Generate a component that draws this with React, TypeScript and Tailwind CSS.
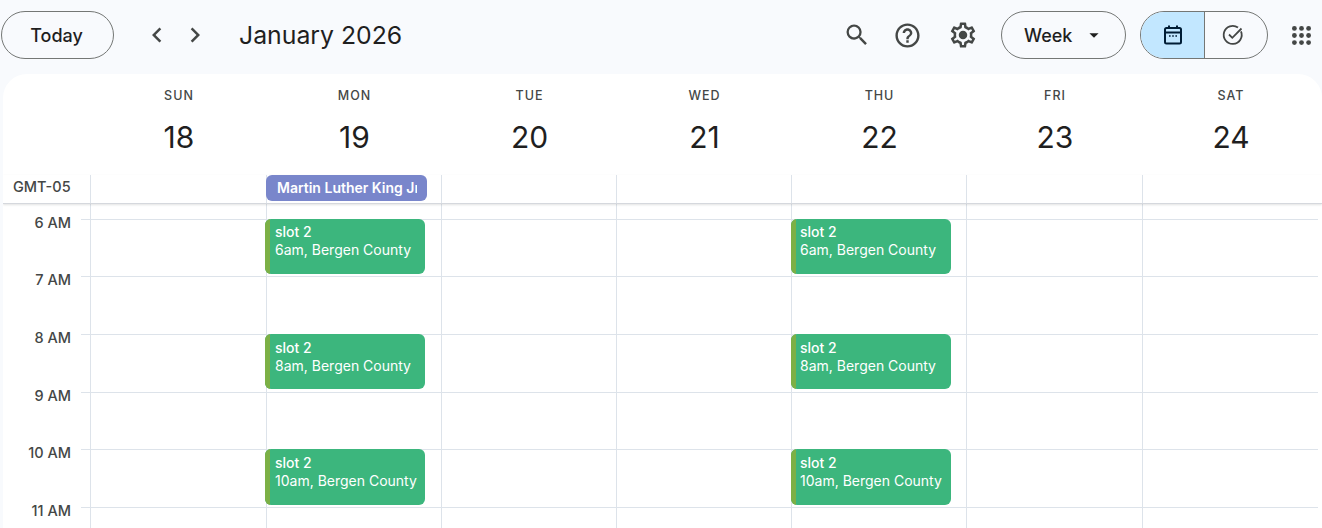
import React from "react";
import { MdOutlineHelpOutline, MdSearch, MdChevronLeft, MdChevronRight, MdArrowDropDown } from "react-icons/md";

const days = [
  ["SUN", "18"], ["MON", "19"], ["TUE", "20"], ["WED", "21"], ["THU", "22"], ["FRI", "23"], ["SAT", "24"],
];
const hours = [
  { h: "6 AM", rowCls: "h-[57px]", ev: "6am", evCls: "h-[55px] pt-[4px]" },
  { h: "7 AM", rowCls: "h-[58px]", ev: "", evCls: "" },
  { h: "8 AM", rowCls: "h-[58px]", ev: "8am", evCls: "h-[55px] pt-[5px]" },
  { h: "9 AM", rowCls: "h-[57px]", ev: "", evCls: "" },
  { h: "10 AM", rowCls: "h-[58px]", ev: "10am", evCls: "h-[56px] pt-[5px]" },
  { h: "11 AM", rowCls: "h-[58px]", ev: "", evCls: "" },
];

function Event({ label, cls, thu }: { label: string; cls: string; thu: boolean }) {
  return (
    <div className={`relative z-10 mt-[-1px] w-[160px] overflow-hidden rounded-[6px] bg-[#3cb67d] text-[14px] leading-[18px] text-white ${thu ? "ml-[-1px] pl-[9px]" : "ml-[-2px] pl-[10px]"} ${cls}`}>
      <div className="absolute bottom-0 left-0 top-0 w-[5px] bg-[#7cb046]" />
      <div className="font-medium">slot 2</div>
      <div className="whitespace-nowrap">{label}, Bergen County</div>
    </div>
  );
}

export default function App() {
  return (
    <div className="h-[528px] w-[1322px] overflow-hidden bg-[#f8fafd] font-['Inter','Roboto',sans-serif] text-[#1f1f1f]">
      <header className="flex h-[74px] items-center pb-[4px]">
        <button className="ml-[1px] flex h-[48px] w-[113px] items-center justify-center rounded-full border border-[#747775] pr-[2px] text-[18px] font-medium">Today</button>
        <div className="ml-[28px] flex items-center gap-[8px] text-[#444746]">
          <MdChevronLeft size={30} />
          <MdChevronRight size={30} />
        </div>
        <h1 className="ml-[29px] pt-[2px] text-[24.8px] font-normal">January 2026</h1>
        <div className="ml-auto flex items-center text-[#444746]">
          <MdSearch size={28} />
          <MdOutlineHelpOutline size={29} className="ml-[22px]" />
          <svg className="ml-[26px]" width="30" height="30" viewBox="0 0 24 24" fill="currentColor">
            <path d="M19.43 12.98c.04-.32.07-.64.07-.98 0-.34-.03-.66-.07-.98l2.11-1.65c.19-.15.24-.42.12-.64l-2-3.46c-.09-.16-.26-.25-.44-.25-.06 0-.12.01-.17.03l-2.49 1c-.52-.4-1.08-.73-1.69-.98l-.38-2.65C14.46 2.18 14.25 2 14 2h-4c-.25 0-.46.18-.49.42l-.38 2.65c-.61.25-1.17.59-1.69.98l-2.49-1c-.06-.02-.12-.03-.18-.03-.17 0-.34.09-.43.25l-2 3.46c-.13.22-.07.49.12.64l2.11 1.65c-.04.32-.07.65-.07.98 0 .33.03.66.07.98l-2.11 1.65c-.19.15-.24.42-.12.64l2 3.46c.09.16.26.25.44.25.06 0 .12-.01.17-.03l2.49-1c.52.4 1.08.73 1.69.98l.38 2.65c.03.24.24.42.49.42h4c.25 0 .46-.18.49-.42l.38-2.65c.61-.25 1.17-.59 1.69-.98l2.49 1c.06.02.12.03.18.03.17 0 .34-.09.43-.25l2-3.46c.12-.22.07-.49-.12-.64l-2.11-1.65zm-1.98-1.71c.04.31.05.52.05.73 0 .21-.02.43-.05.73l-.14 1.13.89.7 1.08.84-.7 1.21-1.27-.51-1.04-.42-.9.68c-.43.32-.84.56-1.25.73l-1.06.43-.16 1.13-.2 1.35h-1.4l-.19-1.35-.16-1.13-1.06-.43c-.43-.18-.83-.41-1.23-.71l-.91-.7-1.06.43-1.27.51-.7-1.21 1.08-.84.89-.7-.14-1.13c-.03-.31-.05-.54-.05-.74s.02-.43.05-.73l.14-1.13-.89-.7-1.08-.84.7-1.21 1.27.51 1.04.42.9-.68c.43-.32.84-.56 1.25-.73l1.06-.43.16-1.13.2-1.35h1.39l.19 1.35.16 1.13 1.06.43c.43.18.83.41 1.23.71l.91.7 1.06-.43 1.27-.51.7 1.21-1.07.85-.89.7.14 1.13z" />
            <circle cx="12" cy="12" r="3.4" />
          </svg>
        </div>
        <button className="ml-[23px] flex h-[48px] w-[125px] items-center justify-between rounded-full border border-[#747775] pl-[22px] pr-[20px] text-[18px] font-medium">
          Week
          <MdArrowDropDown size={22} />
        </button>
        <div className="ml-[14px] flex h-[48px] w-[128px] overflow-hidden rounded-full border border-[#747775]">
          <div className="flex w-[64px] items-center justify-center border-r border-[#747775] bg-[#c2e7ff]">
            <svg width="24" height="24" viewBox="0 0 24 24" fill="none" stroke="#001d35" strokeWidth="2">
              <rect x="4" y="5" width="16" height="15.5" rx="1.5" />
              <path d="M4 9.5h16M8 2.5v3M16 2.5v3" />
              <path d="M8 13h1.6M11.2 13h1.6M14.4 13H16" strokeWidth="1.6" />
            </svg>
          </div>
          <div className="flex flex-1 items-center justify-center text-[#444746]">
            <svg className="-ml-[7px]" width="24" height="24" viewBox="0 0 24 24" fill="none" stroke="currentColor" strokeWidth="1.8">
              <path d="M20 8.4A9 9 0 1 1 17 4.6" />
              <path d="M8 11.5l3.3 3.3L20.5 5.5" />
            </svg>
          </div>
        </div>
        <svg className="ml-[24px] mr-[11px]" width="19" height="19" viewBox="0 0 19 19" fill="#444746">
          {[2.4, 9.5, 16.6].flatMap((y) => [2.4, 9.5, 16.6].map((x) => <circle key={`${x}-${y}`} cx={x} cy={y} r="2.4" />))}
        </svg>
      </header>

      <main className="ml-[3px] h-[454px] overflow-hidden rounded-t-[24px] bg-white">
        <div className="grid grid-cols-[87px_176px_175px_175px_175px_175px_176px_176px]">
          <div />
          {days.map(([d, n]) => (
            <div key={d} className="flex h-[101px] flex-col items-center pl-[2px] pt-[14px]">
              <div className="text-[12.5px] font-medium leading-[16px] tracking-[1px] text-[#444746]">{d}</div>
              <div className="mt-[15px] text-[30px] font-normal leading-[36px]">{n}</div>
            </div>
          ))}
        </div>

        <div className="relative z-20 grid h-[29px] grid-cols-[87px_176px_175px_175px_175px_175px_176px_176px] border-b border-[#d5d8dd] shadow-[0_1px_2px_rgba(60,64,67,0.15)]">
          <div className="pl-[10px] pt-[3px] text-[14.5px] font-medium leading-[18px] text-[#444746]">GMT-05</div>
          {days.map(([d]) => (
            <div key={d} className="border-l border-[#dde3ea]">
              {d === "MON" && (
                <div className="ml-[-1px] flex h-[26px] w-[161px] items-center overflow-hidden rounded-[6px] bg-[#7986cb] pb-[2px] pl-[11px] text-[14px] font-semibold text-white">
                  <span className="w-[140px] overflow-hidden whitespace-nowrap">Martin Luther King Jr. Day</span>
                </div>
              )}
            </div>
          ))}
        </div>

        <div className="grid grid-cols-[87px_176px_175px_175px_175px_175px_176px_176px]">
          <div className="h-[15px]" />
          {days.map(([d]) => <div key={d} className="h-[15px] border-l border-[#dde3ea]" />)}
          {hours.map(({ h, rowCls, ev, evCls }) => (
            <React.Fragment key={h}>
              <div className={`relative ${rowCls}`}>
                <div className="absolute right-0 top-0 h-px w-[9px] bg-[#dde3ea]" />
                <div className="absolute right-[19px] top-[-5px] whitespace-nowrap text-[14.5px] font-medium leading-[18px] text-[#444746]">{h}</div>
              </div>
              {days.map(([d]) => (
                <div key={d} className={`border-l border-t border-[#dde3ea] ${rowCls}`}>
                  {(d === "MON" || d === "THU") && ev && <Event label={ev} cls={evCls} thu={d === "THU"} />}
                </div>
              ))}
            </React.Fragment>
          ))}
        </div>
      </main>
    </div>
  );
}
